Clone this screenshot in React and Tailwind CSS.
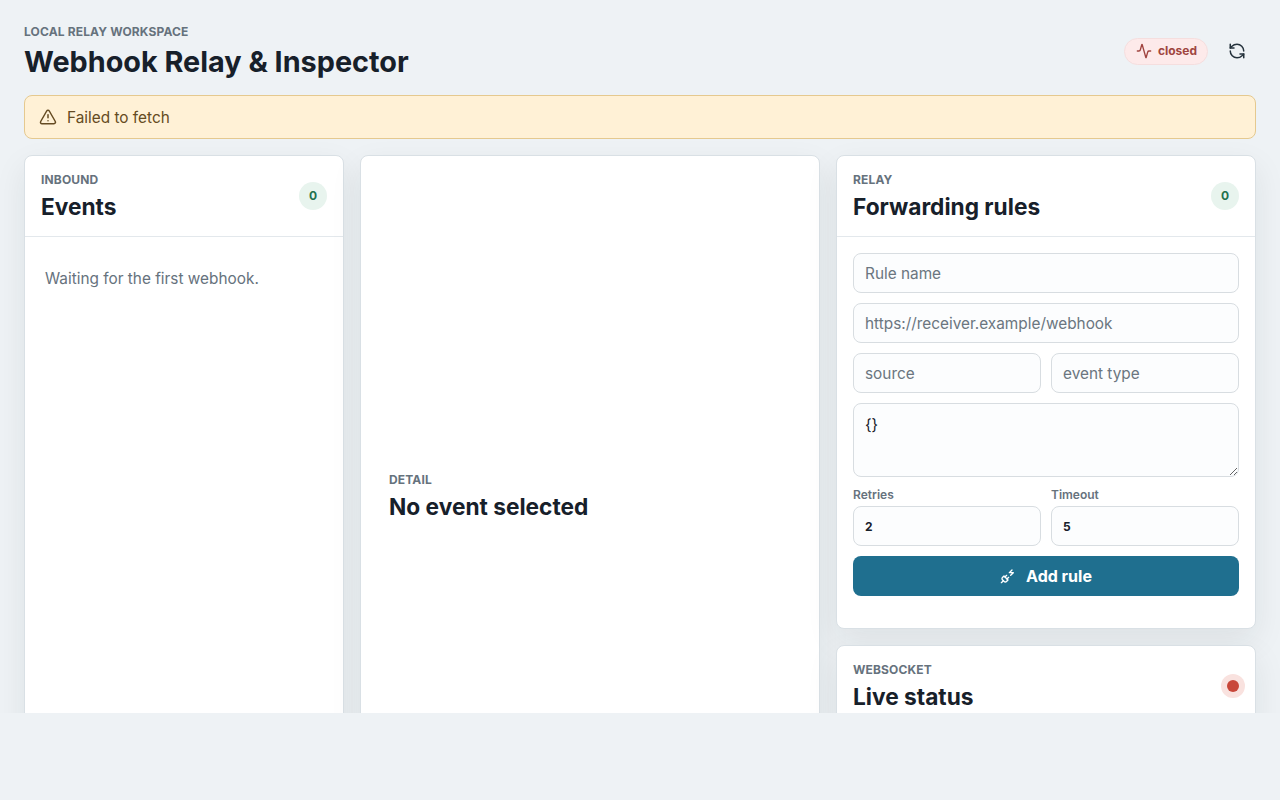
import React from 'react';
import { Activity, PlugZap, RefreshCcw, TriangleAlert } from 'lucide-react';

const inputClass = 'h-10 w-full min-w-0 rounded-lg border border-[#d8dde1] bg-[#fcfdfe] px-[11px] text-[#17202a] placeholder:text-[#6b7680] outline-none';

const Eyebrow = ({ children }) => (
    <p className="text-xs leading-[15px] font-bold tracking-[0.012em] text-[#66727d] uppercase">{children}</p>
);

const PanelHead = ({ eyebrow, title, children }) => (
    <div className="flex items-center justify-between border-b border-[#e3e8ec] px-4 pt-4 pb-[14px]">
        <div>
            <Eyebrow>{eyebrow}</Eyebrow>
            <h2 className="mt-[5px] text-[22.7px] leading-[30px] font-bold text-[#17202a]">{title}</h2>
        </div>
        {children}
    </div>
);

const CountBadge = () => (
    <span className="mb-[3px] flex h-7 w-7 items-center justify-center rounded-full bg-[#e8f4ee] text-xs font-bold text-[#24704f]">0</span>
);

const panelClass = 'rounded-lg border border-[#d9e0e5] bg-white shadow-[0_12px_32px_rgba(23,32,42,0.08)]';

export default function App() {
    return (
        <div className="h-screen bg-[#eef2f5] font-['Inter',sans-serif]">
            <div className="h-[713px] overflow-hidden px-6 pt-6">
                <header className="flex items-center justify-between">
                    <div>
                        <Eyebrow>Local relay workspace</Eyebrow>
                        <h1 className="mt-1 text-[28.8px] leading-[38px] font-bold text-[#17202a]">Webhook Relay &amp; Inspector</h1>
                    </div>
                    <div className="mb-[3px] flex items-center gap-[10px]">
                        <span className="flex h-[27px] items-center gap-[6px] rounded-full border border-[#f5dede] bg-[#fdeaea] pr-[10px] pl-[11px] text-xs font-bold text-[#a04540]">
                            <Activity className="h-4 w-4" />
                            closed
                        </span>
                        <button type="button" className="flex h-[38px] w-[38px] items-center justify-center rounded-lg text-[#25323c]">
                            <RefreshCcw className="h-[18px] w-[18px]" />
                        </button>
                    </div>
                </header>

                <div className="mt-[14px] flex h-11 items-center gap-[10px] rounded-lg border border-[#e5c98f] bg-[#fff1d6] px-[14px] text-[15.36px] leading-[26px] text-[#654b22]">
                    <TriangleAlert className="h-[18px] w-[18px]" />
                    <span className="pt-[1px]">Failed to fetch</span>
                </div>

                <div className="mt-4 grid grid-cols-[320px_460px_420px] gap-4">
                    <section className={`${panelClass} h-[800px]`}>
                        <PanelHead eyebrow="Inbound" title="Events"><CountBadge /></PanelHead>
                        <p className="px-5 pt-[30px] text-[15.36px] leading-[24px] text-[#66727d]">Waiting for the first webhook.</p>
                    </section>

                    <section className={`${panelClass} flex h-[800px] flex-col px-7 pt-[316px]`}>
                        <Eyebrow>Detail</Eyebrow>
                        <h2 className="mt-[5px] text-[22.7px] leading-[30px] font-bold text-[#17202a]">No event selected</h2>
                    </section>

                    <div className="flex flex-col gap-4">
                        <section className={`${panelClass} h-[474px]`}>
                            <PanelHead eyebrow="Relay" title="Forwarding rules"><CountBadge /></PanelHead>
                            <form className="flex flex-col gap-[10px] p-4">
                                <input className={`${inputClass} text-[15.36px]`} placeholder="Rule name" />
                                <input className={`${inputClass} text-[15.36px]`} placeholder="https://receiver.example/webhook" />
                                <div className="grid grid-cols-2 gap-[10px]">
                                    <input className={`${inputClass} text-[15.36px]`} placeholder="source" />
                                    <input className={`${inputClass} text-[15.36px]`} placeholder="event type" />
                                </div>
                                <textarea
                                    className="h-[74px] w-full rounded-lg border border-[#d8dde1] bg-[#fcfdfe] px-[11px] py-[9px] text-[15.36px] text-[#17202a] outline-none"
                                    defaultValue="{}"
                                />
                                <div className="grid grid-cols-2 gap-[10px]">
                                    <label className="flex flex-col gap-[3px] text-xs font-semibold text-[#66727d]">
                                        Retries
                                        <input className={`${inputClass} text-xs font-bold`} defaultValue="2" />
                                    </label>
                                    <label className="flex flex-col gap-[3px] text-xs font-semibold text-[#66727d]">
                                        Timeout
                                        <input className={`${inputClass} text-xs font-bold`} defaultValue="5" />
                                    </label>
                                </div>
                                <button type="button" className="flex h-10 items-center justify-center gap-[10px] rounded-lg bg-[#1f6f8f] text-base font-bold text-white">
                                    <PlugZap className="h-4 w-4" />
                                    Add rule
                                </button>
                            </form>
                        </section>

                        <section className={panelClass}>
                            <PanelHead eyebrow="WebSocket" title="Live status">
                                <span className="mr-[-6px] mb-[3px] flex h-6 w-6 items-center justify-center rounded-full bg-[#f9e2df]">
                                    <span className="h-3 w-3 rounded-full bg-[#c8473a]" />
                                </span>
                            </PanelHead>
                        </section>
                    </div>
                </div>
            </div>
        </div>
    );
}
